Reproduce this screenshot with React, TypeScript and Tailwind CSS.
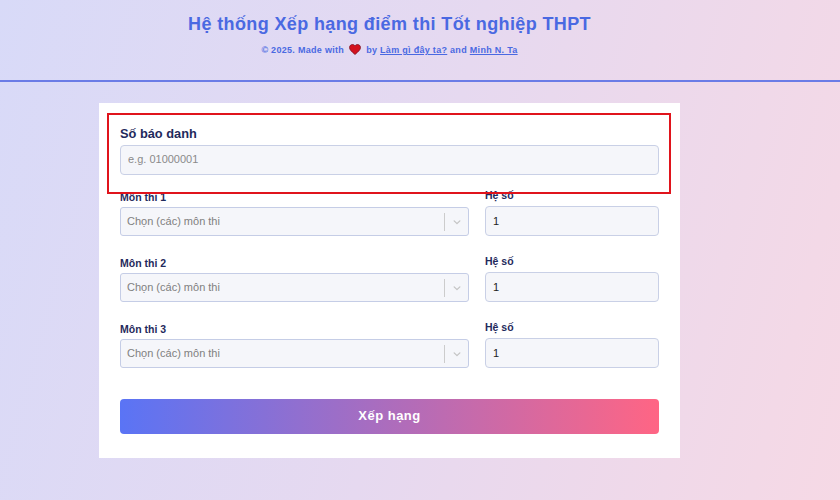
const font = { fontFamily: '"Liberation Sans", Arial, sans-serif' };

const subjects = ["Môn thi 1", "Môn thi 2", "Môn thi 3"];

const Heart = () => (
  <svg width="12" height="11" viewBox="0 0 24 22" className="mx-[5px] inline-block align-[-2px]">
    <path
      d="M12 21 C5 15 1 11.500 1 7 C1 3.500 3.700 1 7 1 C9 1 11 2 12 4 C13 2 15 1 17 1 C20.300 1 23 3.500 23 7 C23 11.500 19 15 12 21 Z"
      fill="#d3121f"
      stroke="#7a1020"
      strokeWidth="1.500"
    />
  </svg>
);

const SubjectRow = ({ label }: { label: string }) => (
  <div className="flex h-[66px] gap-4">
    <div className="w-[349px] pt-[3px]">
      <div className="h-[17px] text-[10.500px] leading-[17px] font-bold text-[#1f2a5c]">{label}</div>
      <div className="mt-[1px] flex h-[29px] items-center rounded-[3px] border border-[#c5cde6] bg-[#f5f6fa]">
        <span className="flex-1 pb-[1px] pl-[6px] text-[11px] text-[#808080]">Chọn (các) môn thi</span>
        <span className="h-[18px] w-px bg-[#cccccc]" />
        <span className="flex w-[23px] justify-center">
          <svg width="12" height="12" viewBox="0 0 20 20" fill="#c4c4c4">
            <path d="M4.500 7.400c.400-.400 1-.400 1.400 0L10 11.400l4.100-4c.400-.400 1-.400 1.400 0s.400 1 0 1.400l-4.800 4.700c-.400.400-1 .400-1.400 0L4.500 8.800c-.400-.400-.400-1 0-1.400z" />
          </svg>
        </span>
      </div>
    </div>
    <div className="w-[174px] pt-[1px]">
      <div className="h-[17px] text-[10.500px] leading-[17px] font-bold text-[#1f2a5c]">Hệ số</div>
      <div className="mt-[2px] flex h-[30px] items-center rounded-[4px] border border-[#c9d0e6] bg-[#f5f6fa] pl-[7px] text-[11px] text-[#222222]">
        1
      </div>
    </div>
  </div>
);

export default function App() {
  return (
    <div
      className="h-[500px] w-[840px] overflow-hidden bg-[linear-gradient(105deg,#d8daf8_0%,#e6d9f0_50%,#f6d9e5_100%)]"
      style={font}
    >
      <header className="h-[82px] border-b-2 border-[#6b7ce6] pt-[12px] pr-[61px] text-center">
        <h1 className="text-[18px] leading-[24px] font-bold tracking-[0.38px] text-[#4a69e2]">
          Hệ thống Xếp hạng điểm thi Tốt nghiệp THPT
        </h1>
        <p className="mt-[8px] text-[9px] leading-[11px] font-bold tracking-[0.3px] text-[#4a69e2]">
          © 2025. Made with
          <Heart />
          by <span className="underline">Làm gì đây ta?</span> and <span className="underline">Minh N. Ta</span>
        </p>
      </header>

      <main className="relative mt-[21px] ml-[99px] h-[355px] w-[581px] bg-white px-[21px] pt-[22px]">
        <label className="block text-[12.800px] leading-[17px] font-bold text-[#1f2a5c]">Số báo danh</label>
        <div className="mt-[3px] flex h-[30px] items-center rounded-[4px] border border-[#c9d0e6] bg-[#f5f6fa] pb-[1px] pl-[7px] text-[11px] text-[#8a8a8a]">
          e.g. 01000001
        </div>

        <div className="mt-[11px]">
          {subjects.map((s) => (
            <SubjectRow key={s} label={s} />
          ))}
        </div>

        <button className="mt-[15px] flex h-[35px] w-[539px] items-center justify-center rounded-[4px] bg-[linear-gradient(90deg,#5a74f5,#ff6584)] pb-[1px] text-[13px] font-bold tracking-[0.5px] text-white">
          Xếp hạng
        </button>

        {/* red highlight drawn over the form */}
        <div className="absolute top-[10px] left-[8px] h-[81px] w-[564px] border-2 border-[#e0141c]" />
      </main>
    </div>
  );
}
